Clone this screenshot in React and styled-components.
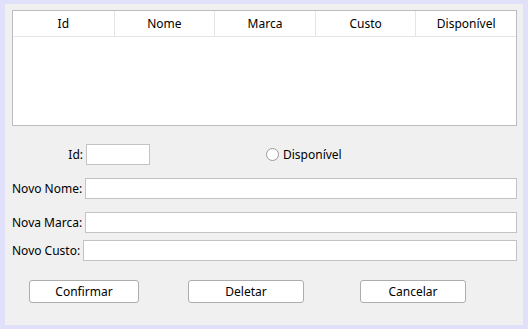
import React from "react";
import styled, { createGlobalStyle } from "styled-components";

const COLUMNS = ["Id", "Nome", "Marca", "Custo", "Disponível"];

const FIELDS = [
  { label: "Novo Nome:", top: 13 },
  { label: "Nova Marca:", top: 13 },
  { label: "Novo Custo:", top: 7 },
];

const BUTTONS = [
  { text: "Confirmar", width: 110, left: 0 },
  { text: "Deletar", width: 116, left: 49 },
  { text: "Cancelar", width: 106, left: 56 },
];

const App = () => {
  return (
    <>
      <GlobalStyle />
      <Frame>
        <Panel>
          <Table>
            <HeaderRow>
              {COLUMNS.map((c) => (
                <HeaderCell key={c}>{c}</HeaderCell>
              ))}
            </HeaderRow>
          </Table>

          <Form>
            <Row $top={18}>
              <Label $width={71}>Id:</Label>
              <Input $width={64} />
              <Radio>
                <RadioCircle />
                Disponível
              </Radio>
            </Row>
            {FIELDS.map((f) => (
              <Row key={f.label} $top={f.top}>
                <Label>{f.label}</Label>
                <Input $grow />
              </Row>
            ))}
          </Form>

          <ButtonRow>
            {BUTTONS.map((b) => (
              <Button key={b.text} $width={b.width} $left={b.left}>
                {b.text}
              </Button>
            ))}
          </ButtonRow>
        </Panel>
      </Frame>
    </>
  );
};

const GlobalStyle = createGlobalStyle`
  html, body {
    margin: 0;
    padding: 0;
    background: #e0e0fa;
  }
  body {
    font-family: "Noto Sans", "Open Sans", sans-serif;
    font-size: 12px;
    color: #000;
  }
`;

const Frame = styled.div`
  width: 528px;
  height: 329px;
  padding: 4px 5px 4px 5px;
  box-sizing: border-box;
  background: #e0e0fa;
`;

const Panel = styled.div`
  height: 321px;
  box-sizing: border-box;
  background: #f0f0f0;
  padding: 6px 6px 0 7px;
  display: flex;
  flex-direction: column;
`;

const Table = styled.div`
  height: 116px;
  box-sizing: border-box;
  border: 1px solid #bdbdbd;
  background: #fff;
`;

const HeaderRow = styled.div`
  display: grid;
  grid-template-columns: repeat(5, 1fr);
  height: 25px;
  border-bottom: 1px solid #e5e5e5;
`;

const HeaderCell = styled.div`
  display: flex;
  align-items: center;
  justify-content: center;
  border-left: 1px solid #e5e5e5;
  &:first-child {
    border-left: none;
  }
`;

const Form = styled.div`
  display: flex;
  flex-direction: column;
`;

const Row = styled.div`
  display: flex;
  align-items: center;
  gap: 3px;
  margin-top: ${(p) => p.$top}px;
`;

const Label = styled.span`
  white-space: nowrap;
  ${(p) => p.$width && `width: ${p.$width}px; text-align: right;`}
`;

const Input = styled.div`
  height: 21px;
  box-sizing: border-box;
  border: 1px solid #c3c3c3;
  background: #fff;
  ${(p) => (p.$grow ? "flex: 1;" : `width: ${p.$width}px;`)}
`;

const Radio = styled.label`
  display: flex;
  align-items: center;
  gap: 4px;
  margin-left: 113px;
`;

const RadioCircle = styled.span`
  width: 13px;
  height: 13px;
  box-sizing: border-box;
  border: 1px solid #9a9a9a;
  border-radius: 50%;
  background: #fff;
`;

const ButtonRow = styled.div`
  display: flex;
  padding-left: 17px;
  margin-top: 19px;
`;

const Button = styled.button`
  width: ${(p) => p.$width}px;
  height: 23px;
  margin-left: ${(p) => p.$left}px;
  border: 1px solid #adadad;
  border-radius: 3px;
  background: #fff;
  font-family: inherit;
  font-size: 12px;
  color: #000;
  padding: 0;
`;

export default App;
